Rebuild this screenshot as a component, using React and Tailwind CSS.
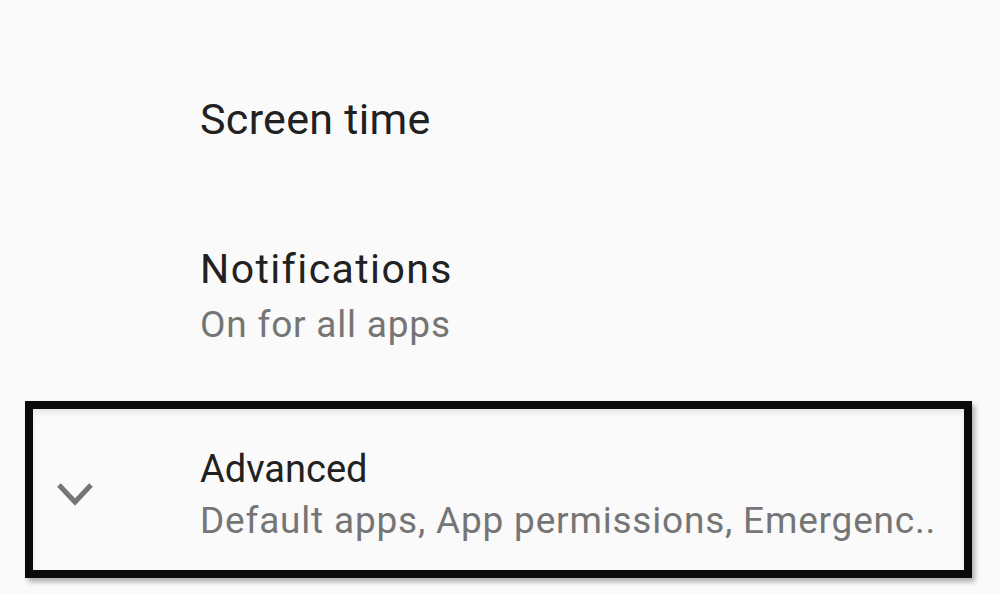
import React from 'react';

function ChevronDown() {
  return (
    <svg width="40" height="26" viewBox="0 0 40 26" className="block">
      <path d="M4 4 L20 21 L36 4" fill="none" stroke="#757575" strokeWidth="5" />
    </svg>
  );
}

export default function App() {
  return (
    <div
      className="w-[1000px] h-[594px] bg-[#fafafa] overflow-hidden flex flex-col"
      style={{ fontFamily: 'Roboto, "Noto Sans", sans-serif' }}
    >
      <div className="pl-[200px] pt-[93px]">
        <div className="text-[43px] leading-[52px] tracking-[0.3px] text-[#212121]">Screen time</div>
      </div>

      <div className="pl-[200px] pt-[100px]">
        <div className="text-[41px] leading-[48px] tracking-[1.4px] text-[#212121]">Notifications</div>
        <div className="mt-[10px] text-[37px] leading-[44px] tracking-[0.8px] text-[#757575]">On for all apps</div>
      </div>

      <div className="ml-[25px] mt-[54px] w-[947px] border-[8px] border-[#0a0a0a] bg-[#fafafa] shadow-[3px_4px_5px_rgba(0,0,0,0.3),inset_0_4px_6px_rgba(0,0,0,0.08)] flex items-center">
        <div className="w-[167px] flex pl-[22px] mt-[8px]">
          <ChevronDown />
        </div>
        <div className="pt-[37px] pb-[27px]">
          <div className="text-[38px] leading-[46px] text-[#212121]">Advanced</div>
          <div className="mt-[7px] text-[37px] leading-[44px] tracking-[0.8px] text-[#757575] whitespace-nowrap">
            Default apps, App permissions, Emergenc..
          </div>
        </div>
      </div>
    </div>
  );
}
